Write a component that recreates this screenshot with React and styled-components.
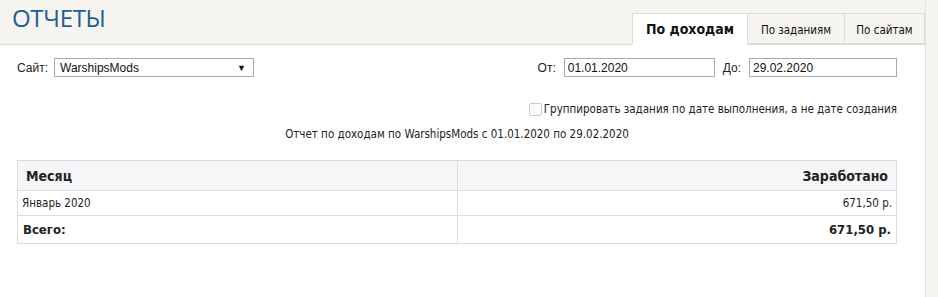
import React from 'react';
import styled, { createGlobalStyle } from 'styled-components';

const GlobalStyle = createGlobalStyle`
  html, body {
    margin: 0;
    padding: 0;
    background: #f5f4ef;
  }
  body {
    font-family: 'DejaVu Sans Condensed', 'DejaVu Sans', sans-serif;
    font-size: 11.5px;
    color: #222;
  }
`;

const Page = styled.div`
  display: flex;
  height: 297px;
  background: #f5f4ef;
`;

const Main = styled.div`
  width: 925px;
  display: flex;
  flex-direction: column;
`;

const Gutter = styled.div`
  flex: 1;
  border-left: 1px solid #e2e1dc;
`;

const Header = styled.div`
  height: 44px;
  display: flex;
  justify-content: space-between;
  align-items: flex-end;
  border-bottom: 1px solid #dcdcd6;
`;

const Title = styled.h1`
  align-self: flex-start;
  margin: 1px 0 0 12px;
  font-family: 'Open Sans', 'Liberation Sans', sans-serif;
  font-weight: 400;
  font-size: 24px;
  color: #1f5d94;
  letter-spacing: -0.3px;
`;

const Tabs = styled.div`
  display: flex;
  margin-bottom: -1px;
`;

const Tab = styled.div`
  height: ${(p) => (p.$active ? '32px' : '31px')};
  width: ${(p) => p.$w}px;
  box-sizing: border-box;
  display: flex;
  align-items: center;
  justify-content: center;
  border: 1px solid #dcdcd6;
  border-bottom: ${(p) => (p.$active ? '1px solid #fff' : '1px solid #dcdcd6')};
  margin-left: -1px;
  background: ${(p) => (p.$active ? '#fff' : '#f5f4ef')};
  font-weight: ${(p) => (p.$active ? 700 : 400)};
  font-size: ${(p) => (p.$active ? '14px' : '11.5px')};
  color: #111;
  padding-top: ${(p) => (p.$active ? '0' : '3px')};
`;

const Body = styled.div`
  flex: 1;
  background: #fff;
  padding: 13px 28px 0 17px;
`;

const FilterRow = styled.div`
  display: flex;
  justify-content: space-between;
  align-items: center;
`;

const Field = styled.label`
  display: flex;
  align-items: center;
  gap: ${(p) => p.$gap || 8}px;
  font-family: 'Liberation Sans', Arial, sans-serif;
  font-size: 12px;
  color: #222;
`;

const Dates = styled.div`
  display: flex;
  gap: 8px;
`;

const Select = styled.div`
  width: 200px;
  height: 19px;
  box-sizing: border-box;
  border: 1px solid #a9a9a9;
  display: flex;
  align-items: center;
  justify-content: space-between;
  padding: 0 7px 0 5px;
  font-size: 12px;
  color: #111;
`;

const Arrow = styled.span`
  font-size: 9px;
  color: #111;
`;

const Input = styled.div`
  width: ${(p) => p.$w}px;
  height: 19px;
  box-sizing: border-box;
  border: 1px solid #a9a9a9;
  padding: 0 3px;
  display: flex;
  align-items: center;
  font-size: 12px;
  color: #111;
`;

const CheckRow = styled.div`
  display: flex;
  justify-content: flex-end;
  align-items: center;
  margin-top: 25px;
  gap: 2px;
`;

const Box = styled.span`
  width: 11px;
  height: 11px;
  border: 1px solid #c8c8c8;
  border-radius: 2px;
  background: #fbfbfb;
`;

const Caption = styled.div`
  text-align: center;
  margin-top: 11px;
`;

const Table = styled.table`
  width: 100%;
  margin-top: 19px;
  border-collapse: collapse;
  table-layout: fixed;
  border: 1px solid #dcdcdc;
`;

const Th = styled.th`
  height: 29px;
  padding: 0 8px;
  text-align: ${(p) => p.$align || 'left'};
  background: #f5f6f8;
  border: 1px solid #dcdcdc;
  font-size: 14px;
  font-weight: 700;
`;

const Td = styled.td`
  height: ${(p) => (p.$bold ? '27px' : '24px')};
  padding: 0 ${(p) => (p.$bold ? '5px' : '4px')};
  text-align: ${(p) => p.$align || 'left'};
  border: 1px solid #dcdcdc;
  font-size: ${(p) => (p.$bold ? '13px' : '11.5px')};
  font-weight: ${(p) => (p.$bold ? 700 : 400)};
`;

export default function App() {
  return (
    <>
      <GlobalStyle />
      <Page>
        <Main>
          <Header>
            <Title>ОТЧЕТЫ</Title>
            <Tabs>
              <Tab $active $w={116}>По доходам</Tab>
              <Tab $w={98}>По заданиям</Tab>
              <Tab $w={81}>По сайтам</Tab>
            </Tabs>
          </Header>
          <Body>
            <FilterRow>
              <Field $gap={6}>
                Сайт:
                <Select>
                  WarshipsMods
                  <Arrow>▼</Arrow>
                </Select>
              </Field>
              <Dates>
                <Field>
                  От:
                  <Input $w={151}>01.01.2020</Input>
                </Field>
                <Field>
                  До:
                  <Input $w={148}>29.02.2020</Input>
                </Field>
              </Dates>
            </FilterRow>
            <CheckRow>
              <Box />
              Группировать задания по дате выполнения, а не дате создания
            </CheckRow>
            <Caption>Отчет по доходам по WarshipsMods с 01.01.2020 по 29.02.2020</Caption>
            <Table>
              <thead>
                <tr>
                  <Th>Месяц</Th>
                  <Th $align="right">Заработано</Th>
                </tr>
              </thead>
              <tbody>
                <tr>
                  <Td>Январь 2020</Td>
                  <Td $align="right">671,50 р.</Td>
                </tr>
                <tr>
                  <Td $bold>Всего:</Td>
                  <Td $bold $align="right">671,50 р.</Td>
                </tr>
              </tbody>
            </Table>
          </Body>
        </Main>
        <Gutter />
      </Page>
    </>
  );
}
